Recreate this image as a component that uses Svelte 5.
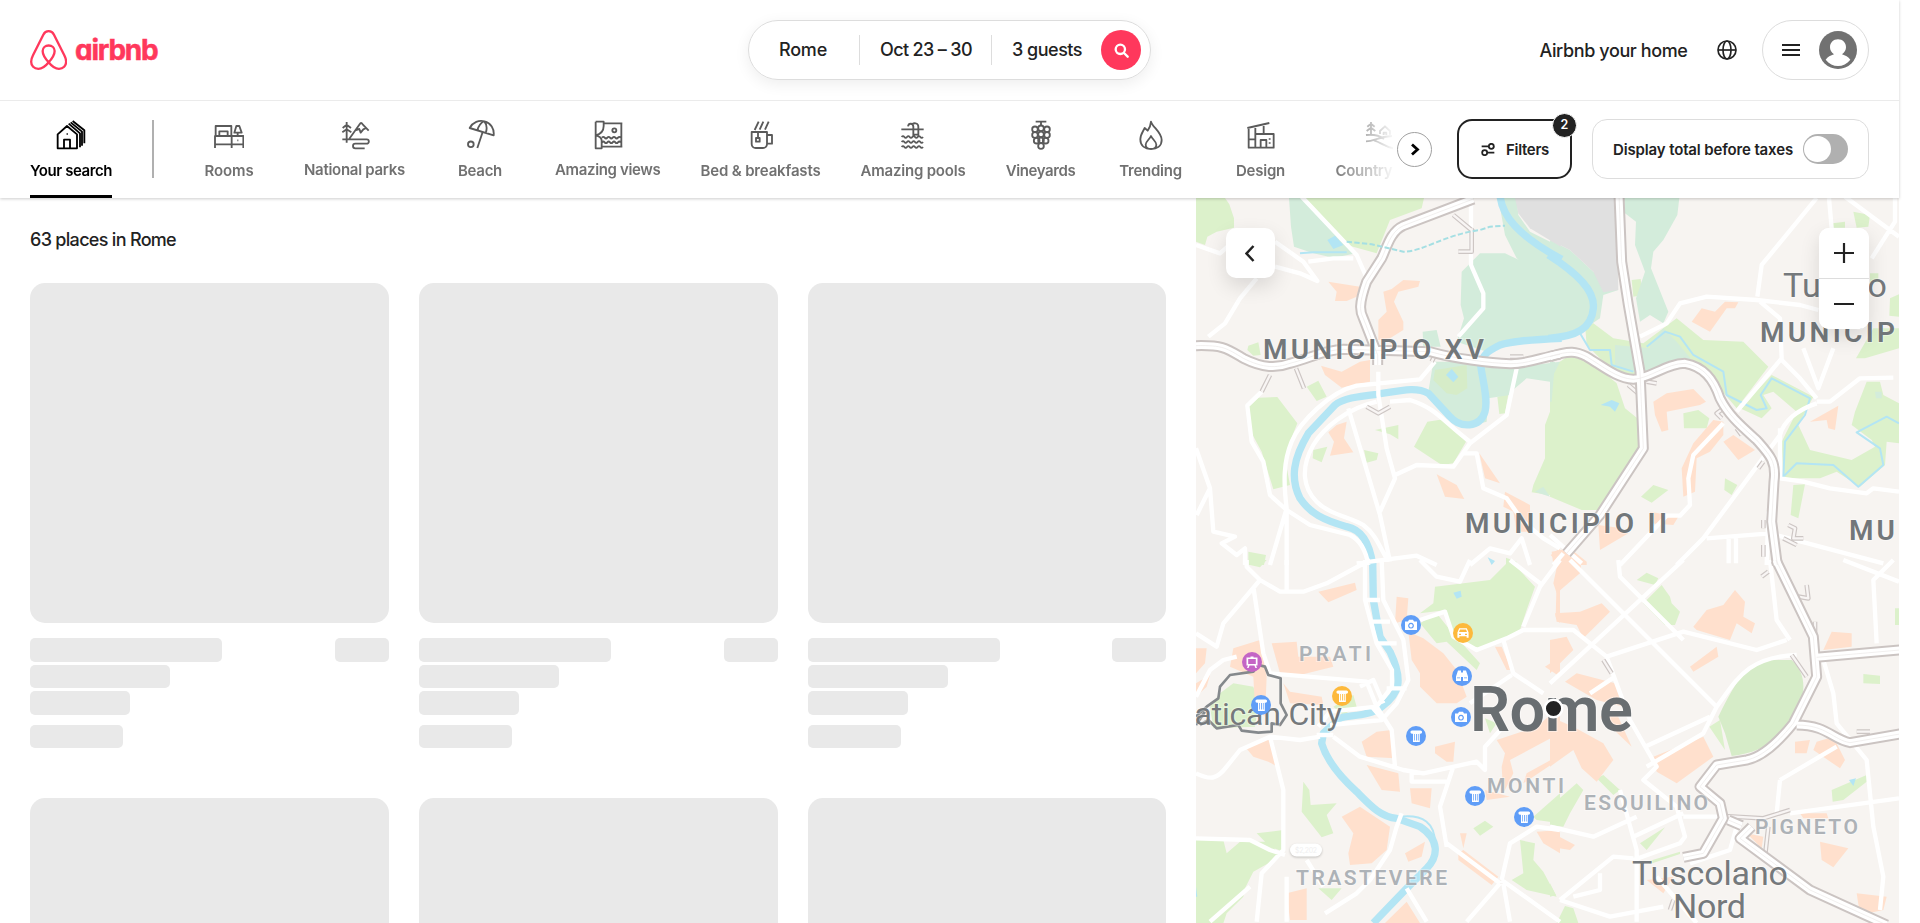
<script>
  // Tightens or opens the tracking of a label until it spans the given width.
  function fit(node, width) {
    const natural = node.getBoundingClientRect().width;
    const count = node.textContent.length;
    node.style.letterSpacing = `${(width - natural) / count}px`;
  }

  const waves = (x0, n, y) => `M${x0} ${y}` + 'q4-5 8 0t8 0'.repeat(n);

  const tabs = [
    { label: 'Rooms', w: 49, d: 'M5 48V18H52V48M16 46V34H41V46M3 84V48H88V84M53 48V84M3 73H88M61 38L67 18H76L83 38ZM71 38V48M70 61h3' },
    { label: 'National parks', w: 101, up: true, d: 'M20 6V68M8 24L20 14L33 24M7 37L20 28L34 37M28 56L59 13Q63 5 68 13L86 32M48 30L58 27L62 38L70 28L78 24M7 58H80a6 6 0 0 1 0 13H46a6 6 0 0 0 0 14H74' },
    { label: 'Beach', w: 44, d: 'M14 24C24 6 42 0 58 4C78 9 88 26 86 46ZM56 4C46 10 40 20 37 31M58 4C66 14 66 28 62 39M53 36L37 84M26 73a8.500 8.500 0 1 0-17 0a8.500 8.500 0 1 0 17 0' },
    { label: 'Amazing views', w: 105.5, up: true, d: 'M8 5H32V18C32 32 24 42 8 46M8 5V85H26V62C26 54 18 48 8 46M32 10H88M85 10V80M26 80H88M70 31a6 6 0 1 0-12 0a6 6 0 1 0 12 0' + waves(27, 3, 53) + 'q4-5 8 0' + waves(27, 3, 67) + 'q4-5 8 0' },
    { label: 'Bed & breakfasts', w: 120, d: 'M17 36H63V72a12 12 0 0 1-12 12H29a12 12 0 0 1-12-12ZM63 45H78V71H63M36 36V53M30 54H41V65H30ZM26 30L38 5M41 29L52 5M57 29L68 5' },
    { label: 'Amazing pools', w: 105, d: 'M10 28H77M30 19c2-11 15-10 16 1V47M42 13c8-6 19-3 19 7V47M46 44H61' + waves(11, 4, 51) + waves(11, 4, 66) + waves(11, 4, 81) },
    { label: 'Vineyards', w: 69.5, d: 'M29 5H61M45 5V16', grapes: [[27, 28], [45, 25], [63, 28], [27, 45], [45, 43], [63, 45], [32, 62], [45, 61], [59, 62], [45, 78]] },
    { label: 'Trending', w: 62.5, d: 'M45 5C50 22 77 36 77 60C77 78 63 87 45 87S13 78 13 58C13 44 20 36 26 24L35 32C40 26 44 16 45 5ZM45 48C49 58 61 64 61 74C61 82 54 87 45 87S29 82 29 74C29 64 41 58 45 48Z' },
    { label: 'Design', w: 49, d: 'M4 24L70 9M8 24V83H83V42H30M28 20V83M53 14V41M8 58H28M44 83V60H61V83M71 55v4M71 67v4' },
    { label: 'Countryside', w: 86, d: 'M21 6V44M10 20L21 11L32 20M8 33L21 23L34 33M6 45C30 42 48 48 60 57M6 64C32 64 40 50 84 48M30 61C52 68 62 80 88 85M48 42V33L63 19L78 33V44M59 45V38H67V45' }
  ];

  // Map artwork, split in four tiles drawn at a third of their own units.
  const tiles = [
    {
      x: 1190, y: 195,
      green: 'M18 9H105L118 28L132 70V98L80 110L52 125L45 150L18 140ZM340 9H702L695 40L600 75L560 175L470 150ZM175 452L205 442L212 480L190 482L172 465ZM350 575L385 557L410 605L380 618ZM175 635L205 608L262 606L322 685L300 740L285 790L300 870L250 883L215 770L185 715ZM672 755L712 680L765 672L828 740L790 805L755 810ZM555 705L625 690V733L600 718ZM370 765L412 755L395 802L368 790ZM522 765L565 775L560 795L530 803ZM922 605L955 597L945 655L928 657ZM1110 500L1085 545L1080 650L1065 690V790L1030 870L1025 892L1110 905ZM175 1070L228 1080L222 1110H175ZM948 1088L980 1100V1110H948Z',
      teal: 'M297 9H335L500 175L430 188L370 175L312 155L303 95ZM815 230L870 175H945L1030 215L1110 300V435L980 440L890 470L800 440L822 370L812 330ZM925 9H980L985 60L1020 110L1110 155V310L1060 250L980 190L945 120ZM730 500H870L990 515L1110 500L1080 560L1010 550L975 580L960 600L895 610L890 680L830 695L770 650L715 590ZM698 410L740 405L752 455H700ZM1035 890L1060 875L1080 905Z',
      top: 'M735 525L830 510L832 580L800 600L770 595L730 555Z',
      gray: 'M975 9H1112V155L1020 100L985 55Z',
      orange: 'M415 260L510 275L500 305L470 318H435L440 290ZM580 290L605 282L640 255L690 258L685 275L625 290L612 320L640 380V405L600 430L565 435V375L590 350ZM393 512L455 530L510 500L540 495V560L455 578L405 540ZM415 712L440 690L470 680L462 730L490 772L420 782L432 740ZM740 838L800 870L823 912L765 905ZM868 775L930 865L885 850ZM945 890L1020 930V1010H980L970 950L940 935ZM1082 1080L1110 1060V1110Z',
      pond: 'M412 135L435 122L460 150L430 162ZM768 540L785 522L805 545L790 562ZM893 1087L915 1098L905 1110Z',
      river: 'M930 0C935 60 980 120 1115 193M1115 430C1000 435 960 440 930 450C890 470 878 480 872 510C878 560 895 610 885 650C870 700 810 700 780 665L715 595C680 575 640 585 560 598C500 605 460 610 435 630L355 715C310 790 300 850 330 910C360 955 400 975 470 995C520 1005 540 1050 548 1110',
      stream: 'M330 175L370 172H470',
      dash: 'M470 140L545 148L640 170C700 170 760 120 870 105L900 95L945 92',
      roads: 'M335 5L500 180L535 260M18 150L90 175L130 140M255 140L340 200L382 258L330 235L255 215M200 250L150 310L105 385L55 425M355 200L430 190H490M843 20V210L880 295V340L805 425M735 500L690 553L500 572C420 590 330 680 305 740C280 800 280 860 290 940V1110M560 620C470 640 400 700 370 750C330 820 340 880 380 920C420 960 480 965 520 990C560 1020 570 1060 590 1090M215 590L172 632L185 740L220 800L240 900L290 945L360 990L480 1020C520 1040 530 1080 535 1110M565 530V600L590 760L615 850L570 950M475 640L570 960L600 1100M600 620L660 615C740 640 760 680 840 740M615 840L680 810L790 815L840 745L950 660L965 590L980 520M820 775H860L880 880L950 910L1000 980L1060 1030L1110 1060M18 760L60 880L70 1010L135 1025L95 1045L140 1080L165 1060V1110M60 880L20 960M290 940L240 1110M840 1110L900 1060L960 1075L995 1030L1020 1110M500 1105L680 1082L740 1110',
      ramps: 'M240 540L215 590M318 520L342 580M845 100V170H805M725 500L735 480M960 485H1000M530 635L565 655L600 635M790 60L850 110',
      highways: 'M850 12L640 92C600 110 590 160 575 190L530 260C505 330 510 350 520 370L563 480V510M18 452C100 450 110 460 160 490C220 520 260 520 300 505C360 490 400 465 460 463L720 470C790 490 900 505 960 506C1010 508 1060 485 1110 478'
    },
    {
      x: 1550, y: 195,
      green: 'M0 520L60 480L110 490L200 565L225 640L262 670L265 760L150 945H95L0 905ZM105 390L130 385L190 430L280 445L340 400L380 370L460 435L580 440L655 515L560 640L480 545L420 500L250 550L170 510L110 450ZM570 640L665 540L790 605L745 690L780 765L905 795L975 755L965 735L905 690L915 650L950 560H990L1000 600L1047 625V745L1010 740L1005 810L930 875L860 830L810 850H700L695 740L740 650L670 590L640 600L665 640L635 670ZM245 255L272 252L278 300L250 305ZM400 655L445 645L478 670L470 700H402ZM273 905L310 870L355 885L305 923ZM525 850L562 870L545 900L523 885ZM730 870L765 868L745 970L722 960ZM910 50L960 60L955 95L920 98ZM848 85L885 80V98H848ZM1020 310L1047 298V365L1018 362ZM970 400H1047V460L945 490H918ZM960 235H985V262H960Z',
      teal: 'M222 9H388L382 60L340 135L310 170L303 220L355 350L340 385L300 360L270 380L258 310L285 230L255 150L258 80L225 55ZM0 135L60 165L130 230L205 285L160 300L150 370L90 410L0 440ZM300 450L340 400L380 440L430 500L370 520L290 545L250 530L195 510V450L300 460ZM0 500L15 500L5 620H0ZM975 590H995V610H978Z',
      gray: 'M0 9H200L205 285L160 292L130 230L60 165L0 135Z',
      orange: 'M425 380L455 340L495 350L525 320L565 322L555 340L530 340L480 410ZM310 620L350 595L430 582L468 620L450 630L350 650L355 705L335 710L315 660ZM520 740L550 720L615 765L565 795ZM490 675L520 680V720L480 770L440 790L435 890L400 905L395 820L430 745ZM780 680L865 632L855 705L835 700L830 675ZM145 990L215 1000L235 1015L150 1065ZM300 950L385 965L370 990L300 985ZM5 1070L60 1060L110 1100V1110H10Z',
      pond: 'M152 630L185 615L208 625L195 650L180 635Z',
      river: 'M-5 180C90 240 135 290 130 340C125 400 80 425 -5 430',
      stream: 'M290 455L345 410L390 425L430 480L520 530L530 600L620 645L650 640L632 600L665 550L780 610L765 660L705 740L700 845L740 805L850 810L925 875L1000 810L990 760L920 712L1010 665L1047 685M90 415L120 465H180L185 510L250 530',
      roads: 'M800 9L635 210L622 305M270 425L350 385L390 325L470 305L620 315L750 330L805 345M885 5L1047 125M1035 5V80L965 190M837 9L845 100M630 320L690 370L695 490L560 650M690 490L750 550L800 610M760 460L805 580L850 460M800 620H840L930 550L1030 548M800 625C740 645 700 680 690 720L460 1030L380 1110M690 700V850L760 860L840 880L950 895L970 880L1047 890M520 685L430 780L415 850L420 930L390 962H350L210 1110M470 1030L660 1015L1000 1105M536 1030V1105M558 1030V1105M0 1020L95 1105M40 1075L10 1110M655 950L650 1110',
      ramps: 'M520 640L500 655L515 670M560 700L575 720M640 800L625 820M640 975V1000M715 990L735 1000L730 1030L760 1030M700 1030L740 1050M640 1050V1085M290 560L320 565M235 570L270 600',
      highways: 'M207 0L215 200L235 330L270 530L280 760L150 960L50 1075M0 485C60 465 80 470 110 485C160 515 200 550 250 553C300 550 350 505 405 505C460 515 490 550 510 610C535 660 570 690 620 735C660 780 680 800 672 860L665 980L682 1110'
    },
    {
      x: 1190, y: 560,
      green: 'M175 0H230L210 22L180 15ZM735 80L900 60L960 0L1035 80L1010 150L990 210L870 270L840 260L780 200L770 150L690 160L730 130ZM690 190L740 160L780 210L870 310L860 330L770 245L740 250ZM130 370L190 380L205 430L195 500L70 505L60 440L90 400ZM430 440L490 405L500 440L460 465ZM340 665L358 690L362 735L440 730L410 765L430 820L395 832L335 755ZM18 840H100L110 880L150 845H240L270 890L190 935L165 985L160 1010L110 1060L100 1090H18ZM200 820L280 810V875L240 860ZM850 805L885 782L910 800L870 827ZM885 475L920 490L900 520ZM965 960L1000 940L990 840L1035 850L1030 900L1060 935L1100 1010L1010 990ZM1030 770L1110 700V790L1040 780ZM385 985L455 985L425 1020Z',
      orange: 'M385 95L495 68L500 90L415 127ZM620 110L655 115L650 180L615 190ZM655 215L700 235L760 280L800 330L830 410L800 430L740 430L690 380V340L665 300ZM245 250L320 245L325 290L420 290L430 320L330 345L270 340ZM130 265L210 240L230 350L225 470L195 440L190 350L120 320ZM18 265H50L45 310L18 340ZM18 370L60 345L50 380L18 410ZM280 370L300 395L395 410L400 435L300 430ZM165 560L240 528L262 620L235 605L190 590ZM515 545L560 515L605 510L615 595L530 590ZM530 615L625 640L630 695L575 690ZM735 560L795 545L790 605H770L735 580ZM660 685L725 685L720 745L665 730ZM455 770L510 740L600 800L590 870L545 910L480 915L475 880L490 820ZM645 880L705 845L695 890L655 905ZM290 1000L350 985V1080H300ZM585 1089L650 1025L690 1089ZM805 880L820 870L925 950L905 975L805 900ZM920 540L1010 510L1040 500L1110 440V520L960 600L970 640L940 700L935 620L945 580ZM1010 640L1100 590L1090 610L1000 670ZM885 690L960 710L890 720ZM810 820H830L820 865ZM1040 815L1110 810V880L1060 850ZM915 260H935L965 330H950ZM1065 320L1110 290V350ZM1100 60H1110V190L1097 170Z',
      pond: 'M790 98L812 92L815 110L800 116ZM18 980L22 1010H18Z',
      river: 'M548 0L550 120L570 230L600 275C640 360 630 400 575 440C540 470 470 465 450 475L400 520L395 550C410 600 450 650 500 695C540 735 570 770 620 775L690 800C750 840 745 890 710 925L650 985L550 1089',
      stream: 'M630 770C700 762 735 790 735 850',
      roads: 'M290 0V90M18 220L80 260L100 190L210 60L170 20V0M210 60L270 95H340L410 70L540 0M190 80L220 280L240 340L530 365L560 440L605 510L615 620M525 0V120L560 250L606 330V380L560 440L420 455L385 500M575 0L580 120L640 240L655 360L620 430L575 480L420 495M18 410L60 330L100 300L140 290M18 640C60 660 80 660 110 620L150 570L240 530L330 540L390 530M240 530L280 690V870L215 940L200 1085M18 835L180 840L240 870L285 885M430 530L510 590L640 630L700 640L860 605L885 630V560L940 500M665 640V665H770M790 620L750 740L770 860M620 800L600 870L540 960L500 1000L405 1060M690 180L765 155L790 230L860 270L950 235L1000 210H1110M1000 200L1050 80L1110 0M940 240L970 340L1060 400M930 970L770 850M930 970L830 1085M935 960L1110 1085M935 960L960 850L1040 800L1110 810M650 985L710 1085M350 900L400 980M840 430L965 345M690 0L740 50L810 65L840 0M530 120H570M545 185H600M560 250H620M590 385H650M545 440L580 480M380 525H430M620 800L635 760M510 380L550 360L580 430M290 950V1085M60 1085L180 980M960 1085L940 970M960 0L1050 70',
      border: 'M18 470L50 440L85 415L90 380L120 345L190 335L205 315L225 320L235 345L272 355V430L290 465L270 495L245 490V515L205 518L155 512L145 495L80 505L55 480L30 495M18 495L45 455'
    },
    {
      x: 1550, y: 560,
      green: 'M0 740L80 670L100 690L60 760L40 800L0 795ZM140 655L160 645L210 690L190 705ZM260 60L290 38L325 55L315 75ZM335 75L360 110L365 130L390 155L375 195H345L280 130ZM478 500L510 480L525 570ZM270 850L345 802L290 870ZM845 690L950 645V665L880 720L848 725ZM940 342L990 347V372L940 370ZM0 970L18 1005L0 1010ZM20 1089L45 1038L70 1045L85 1089ZM1035 145H1047V195H1035ZM290 905L390 875V882L300 912Z',
      top: 'M650 300H725C760 330 770 380 750 430L720 490C680 550 620 580 545 588L525 520L505 470C560 360 590 310 650 300Z',
      orange: 'M25 0H90L95 35L20 100L10 70ZM15 160L90 155L155 130L180 155L100 235L80 195L20 185ZM0 240L50 230L70 270L0 340ZM430 200L470 150L520 135L555 90L585 125L580 170L615 190L605 220L560 190L540 240L440 210ZM420 320L500 260L505 290L430 335ZM45 365L80 340L195 370L220 440L140 420ZM150 470L200 460L245 560ZM310 590L460 530L490 590L380 670L320 635ZM0 470L70 500L160 550L190 600L140 665L95 625L70 570L0 620ZM845 215L905 220V260L820 270ZM735 545L780 540L770 580H735ZM800 545L850 530L885 600L870 625L790 570ZM0 815L75 855L60 870L0 860ZM750 760H830L835 775H760ZM810 845L895 865L850 922L815 900ZM920 1000L1010 1010L1000 1050L930 1065ZM590 820L640 830L635 865ZM290 960L370 950L340 1000Z',
      pond: 'M897 660L918 655L910 678Z',
      roads: 'M0 210H70L170 290L240 480L320 620L280 660L380 740L405 830L390 850L250 900M0 370L400 0M60 0L500 440M205 0L210 50L400 240M170 290L400 215L620 270L710 240M500 440C560 360 590 290 740 285M500 440L460 520L290 620M285 560L480 470M660 0L680 180L720 240M880 0L1047 65M1030 0L970 60L980 250M820 300L850 400L860 490L950 600L970 800L1000 950L990 1050M690 660L860 560M690 660L680 760M720 760L1047 715M0 800L130 830L260 770M210 690L260 870V1085M400 770H530M250 830L400 760M30 1020L190 890L250 895M150 940V990L70 1010M30 1020L180 1070L340 1040M320 950L440 1089M560 800L540 870L420 910M120 400L195 350',
      ramps: 'M635 50L655 35M745 110L775 115L770 75M795 185V240M160 300L185 340M520 768L640 775L720 750M725 285L770 350M920 515H960M655 800L645 890M370 1020L360 1050',
      highways: 'M678 0L790 230L800 350L730 490C690 540 640 590 590 600L500 615L450 680L510 730L520 775L460 880L400 892M800 292L1050 270M740 495C830 495 850 540 900 548L1050 522M605 800L570 835L780 990L1010 1095M535 780L575 797'
    }
  ];

  const labels = [
    { t: 'MUNICIPIO XV', x: 1263, y: 359, w: 221, s: 28, k: 'area' },
    { t: 'MUNICIPIO II', x: 1465, y: 532.5, w: 202, s: 28, k: 'area' },
    { t: 'MUNICIP', x: 1760, y: 342, w: 135, s: 28, k: 'area' },
    { t: 'MU', x: 1849, y: 540, w: 46, s: 28, k: 'area' },
    { t: 'Tufello', x: 1783, y: 297, w: 104, s: 34, k: 'town' },
    { t: 'Rome', x: 1470, y: 731, w: 163, s: 63, k: 'city' },
    { t: 'Vatican City', x: 1175, y: 725, w: 167, s: 32, k: 'town' },
    { t: 'Tuscolano', x: 1632, y: 885, w: 156, s: 34, k: 'town' },
    { t: 'Nord', x: 1673, y: 918, w: 73, s: 34, k: 'town' },
    { t: 'PRATI', x: 1299, y: 661, w: 72, s: 21, k: 'hood' },
    { t: 'TRASTEVERE', x: 1296, y: 885, w: 151, s: 21, k: 'hood' },
    { t: 'MONTI', x: 1487, y: 793, w: 77, s: 21, k: 'hood' },
    { t: 'ESQUILINO', x: 1584, y: 810, w: 124, s: 21, k: 'hood' },
    { t: 'PIGNETO', x: 1755, y: 834, w: 103, s: 21, k: 'hood' }
  ];

  const glyphs = {
    pillar: 'M-4-5.500H4.500A1.500 1.500 0 0 1 4.500-2.300H3.800V6H-3V-2.300H-4A1.600 1.600 0 0 1-4-5.500ZM-1.900-2V4.500h.7V-2ZM0-2V4.500h.8V-2ZM1.900-2V4.500h.7V-2Z',
    camera: 'M-6-3.500h3l1-1.700h4l1 1.700h3v8.500h-12ZM0-2.200a2.900 2.900 0 1 0 .01 0ZM0-1a1.700 1.700 0 1 1-.01 0Z',
    car: 'M-3.800-4.800h7.600l1.800 4.300v5.300h-2v-1.500h-7.200v1.500h-2v-5.300ZM-3-3.600l-1 2.600h8l-1-2.600ZM-4 .8h2v1.200h-2ZM2 .8h2v1.200h-2Z',
    binoculars: 'M-4-5.500h3v2h2v-2h3l2 6v4.500h-5v-4h-2v4h-5V.5ZM-5 1.500h3v.8h-3ZM2 1.500h3v.8h-3Z',
    screen: 'M-5.500-4.500h4v-1h3v1h4v8h-1.500l1 2.500h-1.600l-1-2.500h-4.800l-1 2.500h-1.600l1-2.500h-1.500ZM-3.800-3v5h7.600v-5Z'
  };
  const pois = [
    [1411, 625, 'camera', '#5f9df7'], [1463, 633, 'car', '#fdb93c'], [1252, 662, 'screen', '#c465c5'],
    [1261, 705, 'pillar', '#5f9df7'], [1342, 696, 'pillar', '#fdb93c'], [1462, 676, 'binoculars', '#5f9df7'],
    [1461, 717, 'camera', '#5f9df7'], [1416, 736, 'pillar', '#5f9df7'], [1475, 796, 'pillar', '#5f9df7'], [1524, 817, 'pillar', '#5f9df7']
  ];

  const layer = (key, mode, color, width) => ({ key, mode, color, width });
  const layers = [
    layer('green', 'fill', '#dcf1cb'), layer('teal', 'fill', '#d3ecdb'), layer('gray', 'fill', '#e0e0e0'),
    layer('top', 'fill', '#d6ecc8'), layer('orange', 'fill', '#ffe0cd'), layer('pond', 'fill', '#b3e5f4'),
    layer('stream', 'line', '#b3e5f4', 6), layer('river', 'line', '#b3e5f4', 22), layer('roads', 'line', '#ffffff', 13),
    layer('ramps', 'line', '#cdc6c4', 14), layer('ramps', 'line', '#f8f5f4', 7),
    layer('highways', 'line', '#cbc4c2', 33), layer('highways', 'line', '#ffffff', 21), layer('highways', 'line', '#ece8e7', 2),
    layer('border', 'line', '#85898c', 8)
  ];
</script>

<div class="page">
  <header>
    <div class="bar">
      <a class="logo" href="#home" aria-label="Airbnb homepage">
        <svg width="37.300" height="40" viewBox="0 0 112 120"><path d="M56 97C46 110 36 116.500 25 116.500C12 116.500 3.500 107 3.500 95C3.500 88 6 82 9 76L40 14C44 6 48 3.500 56 3.500S68 6 72 14L103 76C106 82 108.500 88 108.500 95C108.500 107 100 116.500 87 116.500C76 116.500 66 110 56 97C46 86 38 74 38 63C38 53 46 46.500 56 46.500S74 53 74 63C74 74 66 86 56 97Z" fill="none" stroke="#ff385c" stroke-width="7" /></svg>
        <span class="wordmark" use:fit={82.5}>airbnb</span>
      </a>
      <div class="search">
        <span class="where"><span use:fit={48}>Rome</span></span>
        <span class="when"><span use:fit={92}>Oct 23 – 30</span></span>
        <span class="who"><span use:fit={70}>3 guests</span></span>
        <span class="go"><svg width="15" height="15" viewBox="0 0 45 45"><circle cx="19" cy="19" r="14" /><path d="M30 30L41 41" /></svg></span>
      </div>
      <nav>
        <span class="host" use:fit={148}>Airbnb your home</span>
        <svg class="globe" width="20" height="20" viewBox="0 0 60 60"><circle cx="30" cy="30" r="27" /><ellipse cx="30" cy="30" rx="12" ry="27" /><path d="M3 30H57" /></svg>
        <div class="profile">
          <svg width="18" height="12" viewBox="0 0 18 12"><path d="M0 1H18M0 6H18M0 11H18" stroke="#222" stroke-width="2" /></svg>
          <svg width="38" height="38" viewBox="0 0 114 114"><circle cx="57" cy="57" r="57" fill="#717171" /><path d="M57 25C43 25 33 35 33 49C33 57 37 64 45 70C35 73 26 78 20 86C30 98 43 105 57 105S84 98 94 86C88 78 79 73 69 70C77 64 81 57 81 49C81 35 71 25 57 25Z" fill="#fff" /></svg>
        </div>
      </nav>
    </div>

    <div class="categories">
      <div class="scroller">
        <div class="tab active">
          <svg viewBox="0 0 90 90"><path d="M5 85V43L33 18L63 43V85ZM24 85V59H42V85M38 11L72 40V82M44 7L78 35V77M50 3L85 31V70M32 42h3" /></svg>
          <span use:fit={82}>Your search</span>
        </div>
        <i class="divider"></i>
        {#each tabs as tab}
          <div class="tab" class:raised={tab.up}>
            <svg viewBox="0 0 90 90">
              <path d={tab.d} />
              {#each tab.grapes ?? [] as [cx, cy]}<circle {cx} {cy} r="8.500" />{/each}
            </svg>
            <span use:fit={tab.w}>{tab.label}</span>
          </div>
        {/each}
      </div>
      <button class="next" aria-label="Next categories"><svg width="12" height="13" viewBox="0 0 12 13"><path d="M3 1.500L8.500 6.500L3 11.500" /></svg></button>
      <button class="filters">
        <svg width="14" height="13" viewBox="0 0 42 39"><path d="M2 10H24M18 29H40" /><circle cx="31" cy="10" r="7.500" /><circle cx="11" cy="29" r="7.500" /></svg>
        <span use:fit={43}>Filters</span>
        <b>2</b>
      </button>
      <div class="taxes"><span use:fit={180}>Display total before taxes</span><i class="switch"></i></div>
    </div>
  </header>

  <main>
    <section class="results">
      <h1><span use:fit={146}>63 places in Rome</span></h1>
      <div class="grid">
        {#each Array(6) as _}
          <article>
            <div class="photo"></div>
            <div class="line first"><i></i><i></i></div>
            <i class="line second"></i>
            <i class="line third"></i>
            <i class="line fourth"></i>
          </article>
        {/each}
      </div>
    </section>

    <section class="map">
      <svg class="canvas" width="703" height="725" viewBox="1196 198 703 725">
        <rect x="1196" y="198" width="703" height="725" fill="#f7f4f1" />
        {#each layers as l}
          {#each tiles as t}
            {#if t[l.key]}
              <path
                transform="translate({t.x} {t.y}) scale(.33333)"
                d={t[l.key]}
                fill={l.mode === 'fill' ? l.color : 'none'}
                stroke={l.mode === 'line' ? l.color : 'none'}
                stroke-width={l.width}
                stroke-linejoin="round"
              />
            {/if}
          {/each}
        {/each}
        <path transform="translate(1190 195) scale(.33333)" d={tiles[0].dash} fill="none" stroke="#a5dfe3" stroke-width="6" stroke-dasharray="16 7" />
        {#each labels as n}
          <text class={n.k} x={n.x} y={n.y} font-size={n.s} textLength={n.w}>{n.t}</text>
        {/each}
        {#each pois as [x, y, icon, color]}
          <g transform="translate({x} {y})">
            <circle r="10" fill={color} />
            <path d={glyphs[icon]} fill="#fff" fill-rule="evenodd" />
          </g>
        {/each}
        <circle cx="1553.500" cy="708.500" r="8.800" fill="#222" stroke="#fff" stroke-width="2.500" />
        <rect class="price" x="1290" y="843.500" width="32" height="13" rx="6.500" fill="#fff" />
        <text x="1295" y="852.500" class="amount" textLength="22">$2,202</text>
      </svg>
      <button class="collapse" aria-label="Hide list"><svg width="10" height="17" viewBox="0 0 10 17"><path d="M8.500 1L1.500 8.500L8.500 16" /></svg></button>
      <div class="zoom">
        <button aria-label="Zoom in"><svg width="20" height="20" viewBox="0 0 20 20"><path d="M0 10H20M10 0V20" /></svg></button>
        <button aria-label="Zoom out"><svg width="20" height="20" viewBox="0 0 20 20"><path d="M0 10H20" /></svg></button>
      </div>
    </section>
  </main>
</div>

<style>
  :global(body) { background: #fff; overflow: hidden; }
  * { box-sizing: border-box; }
  button { padding: 0; font: inherit; color: inherit; background: #fff; border: 0; }
  .page { width: 1899px; height: 923px; font-family: Inter, "Noto Sans", sans-serif; font-weight: 500; color: #222; display: flex; flex-direction: column; }
  span { white-space: nowrap; }

  header { position: relative; z-index: 2; height: 198px; flex: none; background: #fff; box-shadow: 0 1px 3px rgba(0, 0, 0, .2); }
  .bar { height: 101px; padding: 0 30px; border-bottom: 1px solid #ebebeb; display: grid; grid-template-columns: 718px 403px 1fr; align-items: center; }
  .logo { display: flex; align-items: center; gap: 7.700px; color: #ff385c; text-decoration: none; }
  .wordmark { font: 700 28px/30px Inter, sans-serif; font-feature-settings: "cv11", "ss03"; -webkit-text-stroke: .5px #ff385c; }

  .search { height: 60px; border: 1px solid #ddd; border-radius: 50px; box-shadow: 0 4px 15px rgba(0, 0, 0, .07); display: flex; align-items: center; font-size: 18px; }
  .search > span { display: flex; align-items: center; height: 30px; line-height: 28px; }
  .search > span > span { padding-bottom: 1px; }
  .where { width: 111px; padding-left: 30px; border-right: 1px solid #ddd; }
  .when { width: 132px; padding-left: 20px; border-right: 1px solid #ddd; }
  .who { width: 109px; padding-left: 20px; }
  .search > .go { width: 40px; height: 40px; border-radius: 50%; background: #ff385c; justify-content: center; }
  .go svg, .globe, .tab svg, .next svg, .filters svg, .collapse svg, .zoom svg { fill: none; stroke: currentColor; }
  .go svg { stroke: #fff; stroke-width: 7; stroke-linecap: round; }

  nav { display: flex; align-items: center; justify-content: flex-end; font-size: 18px; }
  .globe { margin: 0 25px 0 29.500px; stroke-width: 5; }
  .profile { width: 107px; height: 60px; border: 1px solid #ddd; border-radius: 30px; display: flex; align-items: center; gap: 19px; padding-left: 19px; }

  .categories { height: 97px; padding: 0 30px 1px; display: flex; align-items: center; }
  .scroller { align-self: flex-start; width: 1363px; height: 97px; overflow: hidden; display: flex; gap: 40px; align-items: flex-start; mask-image: linear-gradient(90deg, #000 1300px, transparent 1366px); }
  .tab { min-width: 70px; height: 97px; flex: none; padding-top: 19px; display: flex; flex-direction: column; align-items: center; gap: 10px; color: #717171; font-size: 15px; line-height: 22px; font-weight: 600; }
  .tab svg { width: 30px; height: 30px; stroke: #5a5a5a; stroke-width: 5.500; stroke-linejoin: round; }
  .tab.raised { gap: 9px; }
  .tab.active { color: #000; border-bottom: 3px solid #000; }
  .tab.active svg { stroke: #000; }
  .divider { width: 2px; height: 58px; flex: none; margin-top: 19px; background: #b0b0b0; }
  .next { width: 35px; height: 35px; margin-left: 4px; border: 1px solid #a0a0a0; border-radius: 50%; display: grid; place-items: center; color: #000; }
  .next svg { stroke-width: 2.800; }

  .filters { position: relative; width: 115px; height: 60px; margin-left: 25px; border: 2px solid #222; border-radius: 15px; display: flex; align-items: center; gap: 11px; padding-left: 22px; font-size: 15px; font-weight: 600; }
  .filters svg { stroke-width: 5.500; }
  .filters b { position: absolute; right: -7px; top: -8px; width: 25px; height: 25px; border: 1px solid #fff; border-radius: 50%; background: #222; color: #fff; font-size: 12.500px; font-weight: 600; line-height: 21px; text-align: center; }
  .taxes { width: 277px; height: 60px; margin-left: 20px; border: 1px solid #ddd; border-radius: 15px; padding: 0 20px; display: flex; align-items: center; justify-content: space-between; font-size: 15px; font-weight: 600; }
  .switch { width: 45px; height: 30px; border-radius: 15px; background: #b0b0b0; padding: 2px 1px; }
  .switch::before { content: ""; display: block; width: 27px; height: 26px; border-radius: 50%; background: #fff; }

  main { flex: 1; display: flex; overflow: hidden; }
  .results { width: 1196px; padding: 30px 30px 0; }
  h1 { margin: 0 0 31px; font-size: 18px; line-height: 24px; font-weight: 500; }
  .grid { display: grid; grid-template-columns: 359px 359px 1fr; gap: 50px 30px; }
  article { height: 465px; }
  .photo { height: 340px; border-radius: 15px; background: #e9e9e9; }
  .line { display: block; height: 23px; border-radius: 5px; background: #e9e9e9; }
  .first { height: 24px; margin-top: 15px; background: none; display: flex; justify-content: space-between; }
  .first i { width: 192px; border-radius: 5px; background: #e9e9e9; }
  .first i + i { width: 54px; }
  .second { width: 140px; margin-top: 3px; }
  .third { width: 100px; height: 24px; margin-top: 3px; }
  .fourth { width: 93px; margin-top: 10px; }

  .map { position: relative; width: 703px; overflow: hidden; }
  .canvas { display: block; font-family: Roboto, sans-serif; }
  .canvas text { paint-order: stroke; stroke: rgba(255, 255, 255, .4); stroke-width: 2px; }
  .area { fill: #72777a; font-weight: 600; }
  .town { fill: #75797c; font-weight: 450; }
  .city { fill: #696e71; font-weight: 600; }
  .hood { fill: #adb2b7; font-weight: 600; }
  .canvas .amount { font: 7px Inter, sans-serif; fill: #f0f0f0; stroke: none; }
  .price { filter: drop-shadow(0 1px 1px rgba(0, 0, 0, .22)); }
  .collapse, .zoom { position: absolute; top: 30px; border-radius: 10px; background: #fff; box-shadow: 0 8px 20px rgba(0, 0, 0, .12); }
  .collapse { left: 30px; width: 49px; height: 50px; display: grid; place-items: center; padding-right: 2px; }
  .collapse svg { stroke-width: 2.500; }
  .zoom { right: 30px; width: 50px; height: 101px; overflow: hidden; }
  .zoom button { width: 50px; height: 50px; display: grid; place-items: center; }
  .zoom button + button { height: 51px; border-top: 1px solid #ddd; }
  .zoom svg { stroke-width: 2.200; }
</style>
